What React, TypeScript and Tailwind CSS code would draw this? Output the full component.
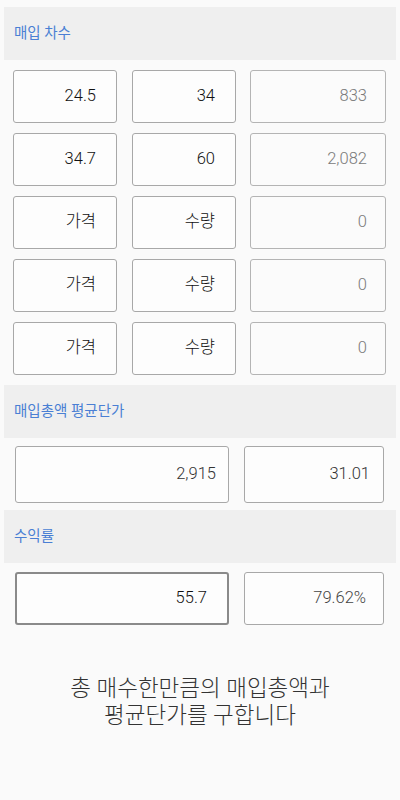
import React from "react";

const font = { fontFamily: "Roboto, 'Noto Sans CJK KR', sans-serif" };

const rows = [
  { price: "24.5", qty: "34", total: "833", filled: true },
  { price: "34.7", qty: "60", total: "2,082", filled: true },
  { price: "가격", qty: "수량", total: "0", filled: false },
  { price: "가격", qty: "수량", total: "0", filled: false },
  { price: "가격", qty: "수량", total: "0", filled: false },
];

const SectionHeader = ({ title }: { title: string }) => (
  <div className="mx-[4px] h-[53px] bg-[#efefef] flex items-center pl-[10px] text-[14.5px] font-normal text-[#4a7fd4]">
    {title}
  </div>
);

const App = () => {
  return (
    <div className="w-[400px] h-[800px] bg-[#fafafa] pt-[7px] overflow-hidden font-light" style={font}>
      <SectionHeader title="매입 차수" />

      <div className="flex flex-col gap-[10px] mt-[10px] pl-[13px]">
        {rows.map((r, i) => (
          <div key={i} className="flex h-[53px]">
            <div className="w-[104px] h-full rounded-[3px] border border-[#a8a8a8] bg-[#fdfdfd] flex items-center justify-end pr-[20px] text-[16.5px] text-[#111]">
              {r.price}
            </div>
            <div className="ml-[15px] w-[104px] h-full rounded-[3px] border border-[#a8a8a8] bg-[#fdfdfd] flex items-center justify-end pr-[20px] text-[16.5px] text-[#111]">
              {r.qty}
            </div>
            <div className="ml-[14px] w-[136px] h-full rounded-[3px] border border-[#b4b4b4] bg-[#fbfbfb] flex items-center justify-end pr-[18px] text-[16.5px] text-[#7a7a7a]">
              {r.total}
            </div>
          </div>
        ))}
      </div>

      <div className="mt-[10px]">
        <SectionHeader title="매입총액 평균단가" />
      </div>
      <div className="flex mt-[8px] pl-[15px] h-[57px]">
        <div className="w-[214px] h-full rounded-[3px] border border-[#a8a8a8] bg-[#fdfdfd] flex items-center justify-end pr-[12px] text-[16.5px] text-[#333]">
          2,915
        </div>
        <div className="ml-[15px] w-[140px] h-full rounded-[3px] border border-[#a8a8a8] bg-[#fdfdfd] flex items-center justify-end pr-[13px] text-[16.5px] text-[#333]">
          31.01
        </div>
      </div>

      <div className="mt-[7px]">
        <SectionHeader title="수익률" />
      </div>
      <div className="flex mt-[9px] pl-[15px] h-[53px]">
        <div className="w-[214px] h-full rounded-[3px] border-2 border-[#8a8a8a] bg-[#fdfdfd] flex items-center justify-end pr-[20px] text-[16.5px] text-[#111]">
          55.7
        </div>
        <div className="ml-[15px] w-[140px] h-full rounded-[3px] border border-[#a8a8a8] bg-[#fdfdfd] flex items-center justify-end pr-[17px] text-[16.5px] text-[#444]">
          79.62%
        </div>
      </div>

      <div className="mt-[50px] text-center text-[22.5px] leading-[27px] text-[#333]">
        <div>총 매수한만큼의 매입총액과</div>
        <div>평균단가를 구합니다</div>
      </div>
    </div>
  );
};

export default App;
